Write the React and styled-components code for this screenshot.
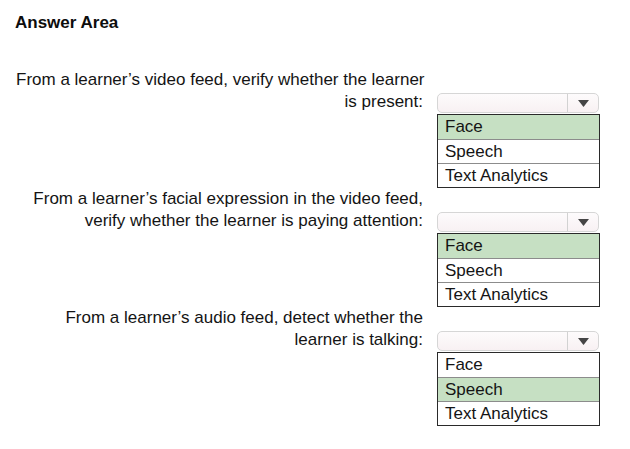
import styled, { createGlobalStyle } from "styled-components";

const GlobalStyle = createGlobalStyle`
  body {
    margin: 0;
    background: #ffffff;
    font-family: "Liberation Sans", Arial, sans-serif;
    color: #141414;
  }
`

const Page = styled.div`
  width: 630px;
  height: 449px;
  padding: 13px 0 0 16px;
  box-sizing: border-box;
`
const Title = styled.div`
  font-size: 17px;
  font-weight: bold;
  line-height: 20px;
  margin-left: -1px;
  color: #0d0d0d;
`
const Questions = styled.div`
  display: flex;
  flex-direction: column;
  gap: 24px;
  margin-top: 60px;
`
const Question = styled.div`
  display: grid;
  grid-template-columns: 407px 163px;
  column-gap: 14px;
  row-gap: 1px;
`
const Label = styled.div`
  height: 20px;
  display: flex;
  flex-direction: column;
  justify-content: flex-end;
  text-align: right;
  font-size: 17px;
  line-height: 22px;
  white-space: nowrap;
`
const Select = styled.div`
  height: 20px;
  width: 162px;
  display: flex;
  box-sizing: border-box;
  border: 1px solid #d6d6d6;
  border-radius: 5px;
  background: linear-gradient(#fdfbfc, #f8f1f3);
`
const Field = styled.div`
  flex: 1;
`
const ArrowBox = styled.div`
  width: 30px;
  border-left: 1px solid #d2d2d2;
  display: flex;
  align-items: center;
  justify-content: center;
`
const List = styled.div`
  grid-column: 2;
  border: 1px solid #2a2a2a;
  display: flex;
  flex-direction: column;
`
const Option = styled.div`
  height: 24px;
  box-sizing: border-box;
  display: flex;
  align-items: center;
  padding-left: 7px;
  font-size: 17px;
  background: ${(p) => (p.$selected ? "#c6e0c3" : "#ffffff")};
  border-top: ${(p) => (p.$first ? "none" : "1px solid #8c8c8c")};
`

const OPTIONS = ["Face", "Speech", "Text Analytics"];

const QUESTIONS = [
  {
    lines: ["From a learner’s video feed, verify whether the learner", "is present:"],
    answer: "Face",
  },
  {
    lines: ["From a learner’s facial expression in the video feed,", "verify whether the learner is paying attention:"],
    answer: "Face",
  },
  {
    lines: ["From a learner’s audio feed, detect whether the", "learner is talking:"],
    answer: "Speech",
  },
];

function Dropdown() {
  return (
    <Select>
      <Field />
      <ArrowBox>
        <svg width="11" height="7" viewBox="0 0 11 7">
          <path d="M0 0 H11 L5.5 7 Z" fill="#454545" />
        </svg>
      </ArrowBox>
    </Select>
  );
}

function App() {
  return (
    <Page>
      <GlobalStyle />
      <Title>Answer Area</Title>
      <Questions>
        {QUESTIONS.map((q, i) => (
          <Question key={i}>
            <Label>
              {q.lines.map((l) => (
                <div key={l}>{l}</div>
              ))}
            </Label>
            <Dropdown />
            <List>
              {OPTIONS.map((o, j) => (
                <Option key={o} $first={j === 0} $selected={o === q.answer}>
                  {o}
                </Option>
              ))}
            </List>
          </Question>
        ))}
      </Questions>
    </Page>
  );
}

export default App;
